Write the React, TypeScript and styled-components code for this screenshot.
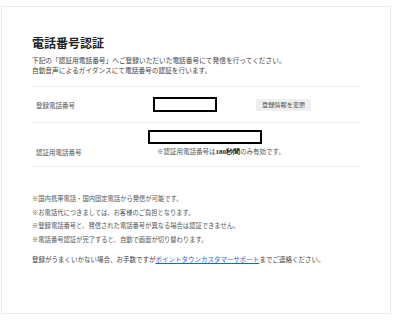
import { FC } from "react"
import styled, { createGlobalStyle } from "styled-components"

const GlobalStyle = createGlobalStyle`
	body {
		margin: 0;
		background: #ffffff;
		font-family: "Noto Sans CJK JP", "Noto Sans", sans-serif;
		color: #333333;
	}
`

const App: FC = () => {
	return (
		<Page>
			<GlobalStyle />
			<Card>
				<Title>電話番号認証</Title>
				<Lead>
					下記の「認証用電話番号」へご登録いただいた電話番号にて発信を行ってください。
					<br />
					自動音声によるガイダンスにて電話番号の認証を行います。
				</Lead>

				<Table>
					<Row $height={36}>
						<Label>登録電話番号</Label>
						<Value>
							<Masked $width={64} $height={15} $offset={5} />
							<ChangeButton>登録情報を変更</ChangeButton>
						</Value>
					</Row>
					<Row $height={44}>
						<Label $shift={14}>認証用電話番号</Label>
						<ValueStack>
							<Masked $width={114} $height={14} $offset={0} />
							<Note>※認証用電話番号は<strong>180秒間</strong>のみ有効です。</Note>
						</ValueStack>
					</Row>
				</Table>

				<Notices>
					<li>※国内携帯電話・国内固定電話から発信が可能です。</li>
					<li>※お電話代につきましては、お客様のご負担となります。</li>
					<li>※登録電話番号と、発信された電話番号が異なる場合は認証できません。</li>
					<li>※電話番号認証が完了すると、自動で画面が切り替わります。</li>
				</Notices>

				<Support>
					登録がうまくいかない場合、お手数ですが<a href="#">ポイントタウンカスタマーサポート</a>までご連絡ください。
				</Support>
			</Card>
		</Page>
	)
}

const Page = styled.div`
	/* Layout */
	padding: 6px 9px 6px 1px;
`

const Card = styled.div`
	/* Layout */
	box-sizing: border-box;
	height: 308px;
	padding: 28px 30px 0 30px;

	/* Border */
	border: 1px solid #ececec;
`

const Title = styled.h1`
	margin: 0;
	font-size: 12px;
	line-height: 16px;
	font-weight: bold;
	color: #222222;
`

const Lead = styled.p`
	margin: 4px 0 0 0;
	font-size: 6.7px;
	line-height: 10px;
	color: #444444;
`

const Table = styled.div`
	/* Layout */
	margin-top: 11px;
	border-top: 1px solid #eeeeee;
`

const Row = styled.div<{ $height: number }>`
	/* Layout */
	display: grid;
	grid-template-columns: 116px 1fr;
	height: ${(p) => p.$height}px;
	box-sizing: border-box;
	border-bottom: 1px solid #eeeeee;
`

const Label = styled.div<{ $shift?: number }>`
	/* Layout */
	align-self: center;
	padding-left: 4px;
	margin-top: ${(p) => p.$shift ?? 0}px;

	/* Text */
	font-size: 6.5px;
	color: #555555;
`

const Value = styled.div`
	display: flex;
	align-items: center;
`

const ValueStack = styled.div`
	display: flex;
	flex-direction: column;
	align-items: flex-start;
	padding-top: 7px;
`

const Masked = styled.div<{ $width: number; $height: number; $offset: number }>`
	/* Layout */
	box-sizing: border-box;
	width: ${(p) => p.$width}px;
	height: ${(p) => p.$height}px;
	margin-left: ${(p) => p.$offset}px;

	/* Color */
	background: #ffffff;
	border: 2px solid #000000;
`

const ChangeButton = styled.button`
	/* Layout */
	margin-left: 39px;
	height: 12px;
	padding: 0 6px;

	/* Color */
	background: #efefef;
	color: #555555;
	border: none;

	/* Text */
	font-family: inherit;
	font-size: 6.2px;
	line-height: 12px;
`

const Note = styled.p`
	margin: 2px 0 0 9px;
	font-size: 6.5px;
	line-height: 10px;
	color: #555555;

	strong {
		font-family: "Liberation Serif", serif;
		font-size: 7px;
		font-weight: bold;
		color: #222222;
	}
`

const Notices = styled.ul`
	margin: 25px 0 0 0;
	padding: 0;
	list-style: none;

	li {
		font-size: 6.3px;
		line-height: 13.7px;
		color: #555555;
	}
`

const Support = styled.p`
	margin: 7px 0 0 0;
	font-size: 6.5px;
	line-height: 10px;
	color: #444444;

	a {
		color: #1a66cc;
		text-decoration: underline;
	}
`

export default App
